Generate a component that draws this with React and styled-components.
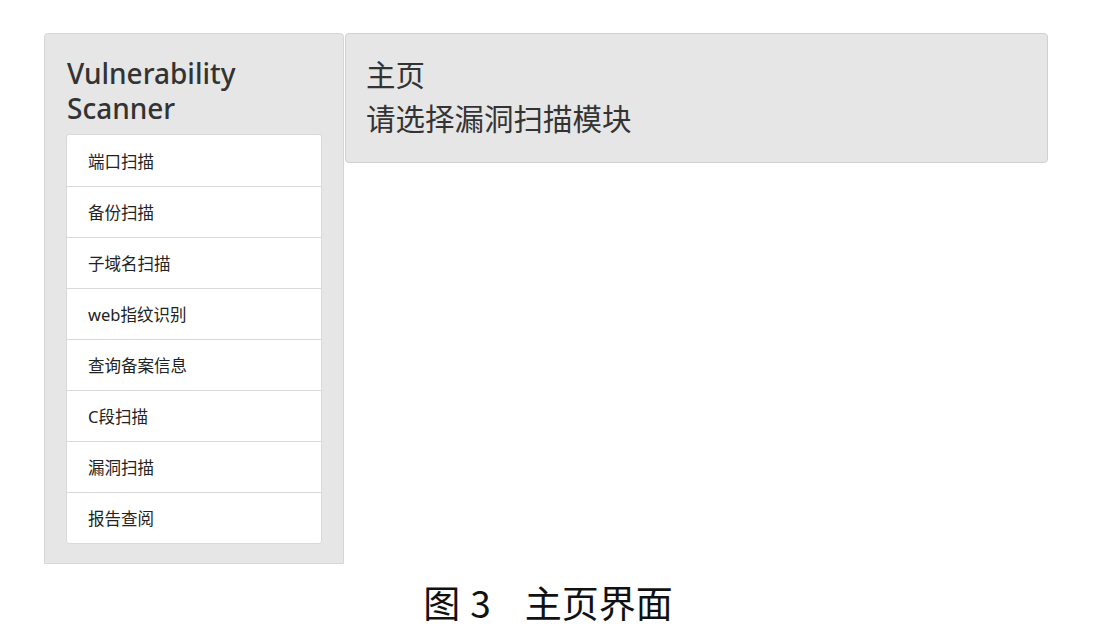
import React from 'react';
import styled, { createGlobalStyle } from 'styled-components';

const GlobalStyle = createGlobalStyle`
  * {
    box-sizing: border-box;
  }
  body {
    margin: 0;
    background: #fff;
    font-family: 'Noto Sans', 'Noto Sans CJK SC', sans-serif;
    color: #333;
  }
`;

const Page = styled.div`
  width: 1110px;
  padding: 33px 0 0 44px;
`;

const Frame = styled.div`
  width: 1004px;
  display: flex;
  flex-direction: column;
  align-items: center;
`;

const Row = styled.div`
  width: 100%;
  display: flex;
  align-items: flex-start;
  gap: 1px;
`;

const Sidebar = styled.div`
  width: 300px;
  height: 531px;
  background: #e6e6e6;
  border: 1px solid #d6d6d6;
  border-radius: 4px 4px 0 0;
  padding: 22px 21px 0 21px;
`;

const Title = styled.h1`
  margin: 0 0 8px 1px;
  font-size: 28px;
  line-height: 35px;
  font-weight: 500;
  color: #333;
`;

const Menu = styled.ul`
  list-style: none;
  margin: 0;
  padding: 0;
  background: #fff;
  border: 1px solid #d9d9d9;
  border-radius: 3px;
`;

const MenuItem = styled.li`
  height: 51px;
  padding: 0 21px;
  display: flex;
  align-items: center;
  font-size: 16.5px;
  color: #222;
  border-top: ${({ first }) => (first ? 'none' : '1px solid #d9d9d9')};
`;

const Header = styled.div`
  flex: 1;
  height: 130px;
  background: #e6e6e6;
  border: 1px solid #d0d0d0;
  border-radius: 4px;
  padding: 19px 21px 0 20px;
`;

const HeaderLine = styled.div`
  font-size: 29.5px;
  line-height: 44px;
  color: #333;
`;

const Caption = styled.div`
  margin-top: 16px;
  margin-left: 4px;
  font-family: 'Noto Sans CJK SC', sans-serif;
  font-size: 37px;
  line-height: 44px;
  color: #111;
  white-space: pre;
`;

const Gap = styled.span`
  display: inline-block;
  width: ${({ w }) => w}px;
`;

const items = [
  '端口扫描',
  '备份扫描',
  '子域名扫描',
  'web指纹识别',
  '查询备案信息',
  'C段扫描',
  '漏洞扫描',
  '报告查阅',
];

const App = () => (
  <>
    <GlobalStyle />
    <Page>
      <Frame>
        <Row>
          <Sidebar>
            <Title>
              Vulnerability
              <br />
              Scanner
            </Title>
            <Menu>
              {items.map((item, i) => (
                <MenuItem key={item} first={i === 0}>
                  {item}
                </MenuItem>
              ))}
            </Menu>
          </Sidebar>
          <Header>
            <HeaderLine>主页</HeaderLine>
            <HeaderLine>请选择漏洞扫描模块</HeaderLine>
          </Header>
        </Row>
        <Caption>
          图<Gap w={10} />3<Gap w={34} />主页界面
        </Caption>
      </Frame>
    </Page>
  </>
);

export default App;
